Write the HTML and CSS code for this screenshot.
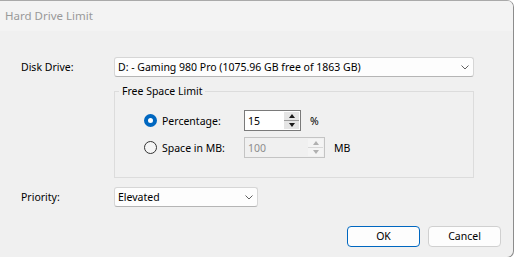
FILE: index.html
```html
<!DOCTYPE html>
<html lang="en">

<head>
    <meta charset="UTF-8">
    <title>Hard Drive Limit</title>
    <link rel="stylesheet" href="styles.css">
</head>

<body>
    <div class="window">
        <div class="titlebar">Hard Drive Limit</div>
        <div class="content">
            <div class="row">
                <div class="label">Disk Drive:</div>
                <div class="combo drive">
                    <span>D: - Gaming 980 Pro (1075.96 GB free of 1863 GB)</span>
                    <svg class="chevron" width="8" height="5" viewBox="0 0 8 5"><path d="M0.5 0.5 L4 4 L7.5 0.5" fill="none" stroke="#606060" stroke-width="1"/></svg>
                </div>
            </div>

            <fieldset class="group">
                <legend>Free Space Limit</legend>
                <div class="group-body">
                    <div class="option">
                        <span class="radio checked"></span>
                        <span class="option-label">Percentage:</span>
                        <div class="spin">
                            <span class="spin-value">15</span>
                            <div class="spin-buttons">
                                <span class="arrow up"></span>
                                <span class="arrow down"></span>
                            </div>
                        </div>
                        <span class="unit">%</span>
                    </div>
                    <div class="option">
                        <span class="radio"></span>
                        <span class="option-label">Space in MB:</span>
                        <div class="spin disabled wide">
                            <span class="spin-value">100</span>
                            <div class="spin-buttons">
                                <span class="arrow up"></span>
                                <span class="arrow down"></span>
                            </div>
                        </div>
                        <span class="unit">MB</span>
                    </div>
                </div>
            </fieldset>

            <div class="row">
                <div class="label">Priority:</div>
                <div class="combo priority">
                    <span>Elevated</span>
                    <svg class="chevron" width="8" height="5" viewBox="0 0 8 5"><path d="M0.5 0.5 L4 4 L7.5 0.5" fill="none" stroke="#606060" stroke-width="1"/></svg>
                </div>
            </div>

            <div class="actions">
                <div class="button default">OK</div>
                <div class="button">Cancel</div>
            </div>
        </div>
    </div>
</body>

</html>
```

FILE: styles.css
```css
body {
    margin: 0;
    background-color: #ffffff;
    font-family: 'Noto Sans', 'Open Sans', sans-serif;
    font-size: 10.5px;
    color: #000;
}

.window {
    width: 513px;
    height: 256px;
    border-top: 1px solid #a9a9a9;
    border-right: 1px solid #8c8c8c;
    border-bottom: 1px solid #8c8c8c;
    border-radius: 0 7px 7px 0;
    background-color: #f0f0f0;
    overflow: hidden;
    display: flex;
    flex-direction: column;
}

.titlebar {
    height: 30px;
    line-height: 29px;
    padding-left: 5px;
    font-size: 11.5px;
    color: #999999;
    background-color: #f3f3f3;
}

.content {
    flex: 1;
    padding: 26px 12px 0 21px;
}

.row {
    display: flex;
    align-items: center;
}

.label {
    width: 93px;
}

.combo {
    box-sizing: border-box;
    height: 20px;
    display: flex;
    align-items: center;
    justify-content: space-between;
    padding: 0 4px 0 3px;
    background-color: #fdfdfd;
    border: 1px solid #d6d6d6;
    border-bottom-color: #b5b5b5;
    border-radius: 3px;
}

.combo.drive {
    width: 360px;
}

.combo.priority {
    width: 144px;
}

.chevron {
    display: block;
}

.group {
    margin: 7px 0 9px 93px;
    width: 358px;
    padding: 0;
    border: 1px solid #dcdcdc;
}

.group legend {
    padding: 0 3px;
    margin-left: 4px;
}

.group-body {
    padding: 12px 0 13px 29px;
}

.option {
    display: flex;
    align-items: center;
    height: 21px;
    margin-bottom: 6px;
}

.radio {
    width: 11px;
    height: 11px;
    border: 1px solid #333;
    border-radius: 50%;
    background-color: #f5f5f5;
    margin-right: 5px;
}

.radio.checked {
    width: 5px;
    height: 5px;
    border: 4px solid #0067c0;
    background-color: #ffffff;
}

.option-label {
    width: 82px;
}

.spin {
    box-sizing: border-box;
    width: 57px;
    height: 21px;
    display: flex;
    align-items: center;
    justify-content: space-between;
    background-color: #fff;
    border: 1px solid #7a7a7a;
    padding-left: 3px;
}

.spin.wide {
    width: 81px;
}

.spin.disabled {
    background-color: #f0f0f0;
    border-color: #c4c4c4;
    color: #8d8d8d;
}

.spin-buttons {
    width: 15px;
    height: 17px;
    margin-right: 1px;
    display: flex;
    flex-direction: column;
    background-color: #e5e5e5;
}

.spin.disabled .spin-buttons {
    background-color: #f4f4f4;
}

.arrow {
    flex: 1;
    display: flex;
    align-items: center;
    justify-content: center;
}

.arrow.up {
    border-bottom: 1px solid #9d9d9d;
}

.arrow::after {
    content: '';
    border-left: 3.5px solid transparent;
    border-right: 3.5px solid transparent;
}

.arrow.up::after {
    border-bottom: 4px solid #1a1a1a;
}

.arrow.down::after {
    border-top: 4px solid #1a1a1a;
}

.spin.disabled .arrow.up {
    border-bottom-color: #d8d8d8;
}

.spin.disabled .arrow.up::after {
    border-bottom-color: #b0b0b0;
}

.spin.disabled .arrow.down::after {
    border-top-color: #b0b0b0;
}

.unit {
    margin-left: 9px;
}

.actions {
    display: flex;
    justify-content: flex-end;
    gap: 8px;
    margin-top: 19px;
}

.button {
    width: 71px;
    height: 19px;
    line-height: 19px;
    text-align: center;
    background-color: #fdfdfd;
    border: 1px solid #d0d0d0;
    border-radius: 4px;
}

.button.default {
    border-color: #0067c0;
}
```
